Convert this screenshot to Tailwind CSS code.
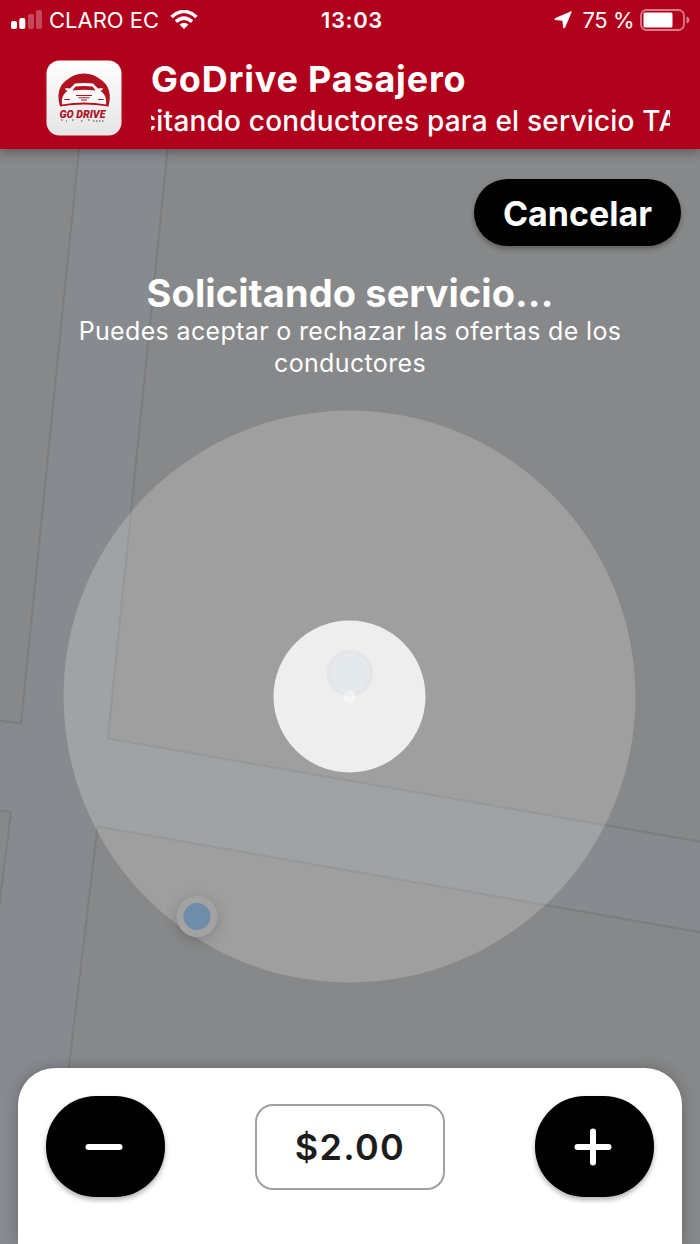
<!DOCTYPE html>
<html lang="es">
<head>
<meta charset="utf-8">
<title>GoDrive Pasajero</title>
<script src="https://cdn.jsdelivr.net/npm/@tailwindcss/browser@4"></script>
</head>
<body class="relative w-[700px] h-[1244px] overflow-hidden bg-[#878889] text-white font-[Inter,Roboto,sans-serif]">
<!-- Map -->
<svg class="absolute inset-0" width="700" height="1244" viewBox="0 0 700 1244">
  <rect width="700" height="1244" fill="#878a8f"/>
  <circle cx="349.500" cy="696.500" r="286" fill="#878c8f"/>
  <g fill="#878889" stroke="#7c7d7e" stroke-width="2">
    <path d="M-5 140H80L21 723.500L-5 720Z"/>
    <path d="M168.500 140H705V842.500L108 738.500Z"/>
    <path d="M-5 810L11 812L0 900L-5 940Z"/>
    <path d="M97.500 826.500L705 933V1250H47Z"/>
  </g>
  <circle cx="349.500" cy="696.500" r="286" fill="#fff" fill-opacity=".2"/>
  <circle cx="349.500" cy="696.500" r="76" fill="#eee"/>
  <circle cx="350" cy="673" r="21.500" fill="#e3e9ed" stroke="#e4e5e6" stroke-width="3.500"/>
  <circle cx="349.500" cy="697" r="6.500" fill="#fff" fill-opacity=".45"/>
  <circle cx="197" cy="916.500" r="20.500" fill="#a3a3a3" class="drop-shadow-[0_3px_7px_rgba(0,0,0,0.18)]"/>
  <circle cx="197" cy="916.500" r="13.500" fill="#6f8caa"/>
</svg>

<div class="relative flex h-full flex-col">
  <header class="h-[149px] shrink-0 bg-[#b1001c] shadow-[0_3px_10px_rgba(0,0,0,0.35)]">
    <div class="grid h-10 grid-cols-3 items-center text-[22px] leading-none">
      <div class="flex items-center pl-[11px]">
        <svg width="32" height="20" viewBox="0 0 32 20" fill="#fff"><rect x="0" y="11" width="6" height="8" rx="2"/><rect x="8.300" y="8" width="6" height="11" rx="2"/><g opacity=".28"><rect x="17" y="4" width="6" height="15" rx="2"/><rect x="25" y="0" width="6" height="19" rx="2"/></g></svg>
        <span class="ml-[6px] whitespace-nowrap">CLARO EC</span>
        <svg class="ml-[11px]" width="28" height="20" viewBox="0 0 28 20" fill="none" stroke="#fff" stroke-width="3.600"><path d="M1.500 7Q14-4 26.500 7"/><path d="M6 11.700Q14 4.700 22 11.700"/><path d="M14 19L9.500 14.600Q14 10.800 18.500 14.600Z" fill="#fff" stroke="none"/></svg>
      </div>
      <div class="pl-[4px] text-center font-semibold tracking-[0.6px]">13:03</div>
      <div class="flex items-center justify-end pr-[10px]">
        <svg width="18" height="18" viewBox="0 0 18 18" fill="#fff" stroke="#fff" stroke-width="1" stroke-linejoin="round"><path d="M17.300 .7L10.500 16.800H9.700L8.800 9.200L1 8.600V7.700Z"/></svg>
        <span class="ml-[11px] whitespace-nowrap tracking-[-0.5px]">75 %</span>
        <svg class="ml-[6px]" width="50" height="22" viewBox="0 0 50 22"><rect x="1" y="1" width="43" height="20" rx="5.500" fill="none" stroke="#fff" stroke-opacity=".48" stroke-width="1.800"/><rect x="3.500" y="3.500" width="29" height="15" rx="1.500" fill="#fff"/><path d="M46.500 7.500Q49.500 8.500 49.500 11T46.500 14.500Z" fill="#fff" fill-opacity=".48"/></svg>
      </div>
    </div>
    <div class="flex pl-[46px] pt-[20px]">
      <svg width="76" height="76" viewBox="0 0 76 76">
        <defs><linearGradient id="tile" x2="0" y2="1"><stop stop-color="#fff"/><stop offset="1" stop-color="#e5e5e5"/></linearGradient></defs>
        <rect x=".5" y=".5" width="75" height="75" rx="13" fill="url(#tile)"/>
        <path d="M14 46.500Q9 29 20 20.500Q28 13.500 38 13.500Q48 13.500 56 20.500Q67 29 62.500 46.500Q38 42.500 14 46.500Z" fill="#b1121f"/>
        <path d="M16 44.500Q15 36 20 32L22 31L19.500 30V28L24 28.500L29 23.500Q38 22.500 47 23.500L52 28.500L56.500 28V30L54 31L56 32Q61 36 60 44.500Q38 40.500 16 44.500Z" fill="#fafafa"/>
        <path d="M29.500 26.500Q38 25.500 46.500 26.500L49.500 30.500Q38 29 26.500 30.500Z" fill="#b1121f"/>
        <path d="M30 35.500H46M32.500 37.800H43.500M35 40H41M18.500 39.500H24M52 39.500H57.500" stroke="#b1121f" stroke-width="1" fill="none"/>
        <text x="13.500" y="57.500" textLength="46" lengthAdjust="spacingAndGlyphs" font-family="Roboto" font-style="italic" font-weight="900" font-size="11.500" fill="#b1121f">GO DRIVE</text>
        <path d="M15 60H17M20 61H21M26 60H28M35 61H37M42 60H44M47 61H58" stroke="#777" stroke-width="1.500" stroke-dasharray="1.500 1.500"/>
      </svg>
      <div class="ml-[29px] w-[519px] overflow-hidden">
        <h1 class="text-[36px] font-bold leading-[39px] tracking-[0.8px] whitespace-nowrap">GoDrive Pasajero</h1>
        <p class="-ml-[61px] text-[28px] leading-[44px] tracking-[0.2px] font-medium whitespace-nowrap">Solicitando conductores para el servicio TAXI</p>
      </div>
    </div>
  </header>

  <main class="flex flex-1 flex-col">
    <button class="mt-[30px] mr-[19px] h-[67px] w-[207px] self-end rounded-full bg-black pt-[2px] text-[34px] font-bold shadow-[0_3px_5px_rgba(0,0,0,0.3)]">Cancelar</button>
    <h2 class="mt-[23px] text-center text-[38px] font-bold leading-[48px] tracking-[0.1px]">Solicitando servicio...</h2>
    <p class="-mt-[2px] text-center text-[25px] leading-[32px] tracking-[0.35px]">Puedes aceptar o rechazar las ofertas de los<br>conductores</p>
  </main>

  <section class="mx-[18px] flex h-[176px] shrink-0 items-start justify-between rounded-t-[37px] bg-white px-[28px] pt-[28px] shadow-[0_0_14px_rgba(0,0,0,0.25)]">
    <button class="flex h-[101px] w-[119px] items-center justify-center rounded-[50px] bg-black pr-[4px] shadow-[0_3px_5px_rgba(0,0,0,0.3)]" aria-label="Menos">
      <svg width="38" height="38" viewBox="0 0 38 38"><path d="M3.500 19H34.500" stroke="#fff" stroke-width="6" stroke-linecap="round"/></svg>
    </button>
    <div class="mt-[8px] flex h-[86px] w-[190px] items-center justify-center rounded-[18px] border-2 border-[#a0a0a0] text-[36px] font-semibold tracking-[1.3px] text-[#1c1c1c]">$2.00</div>
    <button class="flex h-[101px] w-[119px] items-center justify-center rounded-[50px] bg-black pr-[4px] shadow-[0_3px_5px_rgba(0,0,0,0.3)]" aria-label="Más">
      <svg width="38" height="38" viewBox="0 0 38 38"><path d="M3.500 19H34.500M19 3.500V34.500" stroke="#fff" stroke-width="6" stroke-linecap="round"/></svg>
    </button>
  </section>
</div>
</body>
</html>
